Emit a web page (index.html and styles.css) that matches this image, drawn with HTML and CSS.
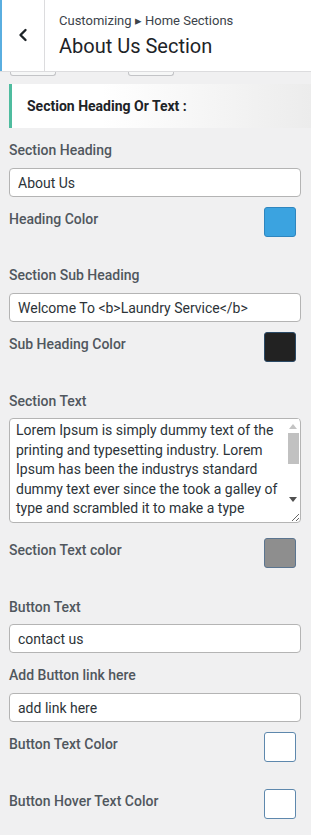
FILE: index.html
```html
<!DOCTYPE html>
<html lang="en">
<head>
  <meta charset="UTF-8" />
  <meta name="viewport" content="width=device-width, initial-scale=1" />
  <title>About Us Section</title>
  <link rel="stylesheet" href="styles.css">
</head>
<body>

  <div class="header">
    <button class="back" aria-label="Back">
      <svg width="12" height="14" viewBox="0 0 12 14"><path d="M8.5 2 L3.5 7 L8.5 12" fill="none" stroke="#1d2327" stroke-width="2.4" stroke-linecap="round" stroke-linejoin="round"/></svg>
    </button>
    <div class="title">
      <div class="crumb">Customizing &#9656; Home Sections</div>
      <h1>About Us Section</h1>
    </div>
  </div>

  <div class="panel">
    <div class="peek">
      <span class="peek-box"></span>
      <span class="peek-box second"></span>
    </div>

    <div class="section-title">Section Heading Or Text :</div>

    <div class="control text first">
      <label>Section Heading</label>
      <input type="text" value="About Us">
    </div>

    <div class="control color">
      <label>Heading Color</label>
      <span class="swatch blue"></span>
    </div>

    <div class="control text after-color">
      <label>Section Sub Heading</label>
      <input type="text" value="Welcome To <b>Laundry Service</b>">
    </div>

    <div class="control color">
      <label>Sub Heading Color</label>
      <span class="swatch dark"></span>
    </div>

    <div class="control text after-color wide">
      <label>Section Text</label>
      <div class="area">
        <textarea rows="5">Lorem Ipsum is simply dummy text of the printing and typesetting industry. Lorem Ipsum has been the industrys standard dummy text ever since the took a galley of type and scrambled it to make a type specimen book. It has survived not only five centuries, but also the leap into electronic typesetting.</textarea>
        <div class="scrollbar">
          <span class="arrow up"></span>
          <span class="thumb"></span>
          <span class="arrow down"></span>
        </div>
      </div>
    </div>

    <div class="control color after-area">
      <label>Section Text color</label>
      <span class="swatch grey"></span>
    </div>

    <div class="control text after-color wide">
      <label>Button Text</label>
      <input type="text" value="contact us">
    </div>

    <div class="control text">
      <label>Add Button link here</label>
      <input type="text" value="add link here">
    </div>

    <div class="control color">
      <label>Button Text Color</label>
      <span class="swatch white"></span>
    </div>

    <div class="control color spaced">
      <label>Button Hover Text Color</label>
      <span class="swatch white"></span>
    </div>
  </div>

</body>
</html>
```

FILE: styles.css
```css
* {
  box-sizing: border-box;
}
body {
  margin: 0;
  background: #f0f0f1;
  font-family: Roboto, "Noto Sans", sans-serif;
  color: #50575e;
}

/* Header */
.header {
  display: flex;
  height: 72px;
  background: #fff;
  border-bottom: 1px solid #dcdcde;
}
.back {
  width: 45px;
  padding: 0;
  border: none;
  border-left: 2px solid #5aaee0;
  border-right: 1px solid #dcdcde;
  background: #fff;
  display: flex;
  align-items: center;
  justify-content: center;
  padding-bottom: 2px;
}
.title {
  padding: 12px 0 0 14px;
}
.crumb {
  font-size: 13px;
  line-height: 18px;
  color: #3c434a;
}
h1 {
  margin: 4px 0 0;
  font-size: 20px;
  line-height: 24px;
  font-weight: 400;
  color: #1d2327;
}

/* Panel */
.panel {
  padding: 0 10px 20px 9px;
}
.peek {
  display: flex;
  gap: 72px;
  padding-left: 1px;
  height: 4px;
}
.peek-box {
  width: 46px;
  height: 4px;
  border: 1px solid #c3c4c7;
  border-top: none;
  border-radius: 0 0 3px 3px;
  background: #f6f7f7;
}
.section-title {
  margin: 8px -10px 0 0;
  height: 44px;
  padding: 0 0 0 15px;
  display: flex;
  align-items: center;
  border-left: 3px solid #4fbc9f;
  background: linear-gradient(to right, #fff 30%, #ececec);
  font-size: 14px;
  font-weight: 700;
  color: #1d2327;
}

.control label {
  display: block;
  font-size: 14px;
  line-height: 20px;
  font-weight: 500;
  color: #50575e;
}
.control.text label {
  margin-bottom: 8px;
}
.control.text {
  margin-top: 12px;
}
.control.after-color {
  margin-top: 28px;
}
.control.wide {
  margin-top: 29px;
}
.control.wide label {
  margin-bottom: 7px;
}
.control.color {
  margin-top: 10px;
  display: flex;
  justify-content: space-between;
  align-items: flex-start;
}
.control.color label {
  padding-top: 2px;
}
.control.after-area {
  margin-top: 15px;
}
.control.spaced {
  margin-top: 27px;
}

input,
textarea {
  display: block;
  width: 100%;
  margin: 0;
  border: 1px solid #b4b4b4;
  border-radius: 4px;
  background: #fff;
  font-family: Roboto, "Noto Sans", sans-serif;
  font-size: 14px;
  color: #2c3338;
}
input {
  height: 29px;
  padding: 0 8px;
}

/* textarea with its drawn scrollbar */
.area {
  position: relative;
}
textarea {
  height: 105px;
  padding: 2px 16px 0 6px;
  line-height: 1.4;
  overflow: hidden;
  resize: vertical;
}
.scrollbar {
  position: absolute;
  top: 1px;
  right: 2px;
  bottom: 18px;
  width: 12px;
  background: #fff;
  display: flex;
  flex-direction: column;
}
.arrow {
  height: 12px;
  display: flex;
  align-items: center;
  justify-content: center;
}
.arrow::before {
  content: "";
  border-left: 4px solid transparent;
  border-right: 4px solid transparent;
}
.arrow.up::before {
  border-bottom: 5px solid #c4c4c4;
  margin-top: 3px;
}
.arrow.down {
  margin-top: auto;
}
.arrow.down::before {
  border-top: 5px solid #505050;
}
.thumb {
  display: block;
  height: 31px;
  margin: 2px 0 0 1px;
  background: #c1c1c1;
}

.swatch {
  display: block;
  width: 32px;
  height: 30px;
  margin-right: 5px;
  border: 1px solid #4a7399;
  border-radius: 3px;
}
.swatch.blue {
  background: #3ba3e0;
  border-color: #2f86bf;
}
.swatch.dark {
  background: #222;
  border-color: #2b4a66;
}
.swatch.grey {
  background: #8e8e8e;
  border-color: #5b7590;
}
.swatch.white {
  background: #fff;
  border-color: #5e88ad;
}
```
